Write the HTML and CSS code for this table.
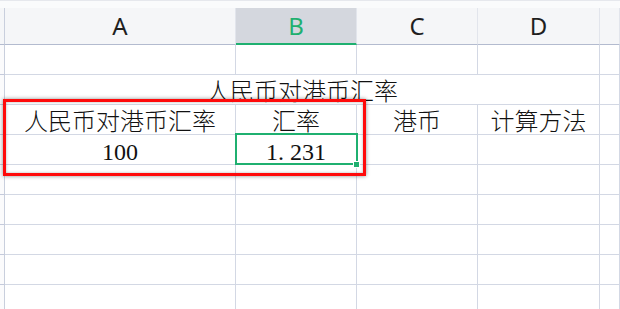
FILE: index.html
```html
<!DOCTYPE html>
<html lang="zh-CN">
<head>
<meta charset="utf-8">
<title>人民币对港币汇率</title>
<link rel="stylesheet" href="styles.css">
</head>
<body>
<div class="page">
  <div class="topband"></div>
  <div class="sheet">
    <div class="h corner"></div>
    <div class="h">A</div>
    <div class="h active">B</div>
    <div class="h">C</div>
    <div class="h">D</div>
    <div class="h"></div>

    <div class="c rh"></div><div class="c"></div><div class="c"></div><div class="c"></div><div class="c"></div><div class="c"></div>

    <div class="c rh"></div><div class="c title">人民币对港币汇率</div><div class="c"></div>

    <div class="c rh"></div><div class="c">人民币对港币汇率</div><div class="c">汇率</div><div class="c">港币</div><div class="c">计算方法</div><div class="c"></div>

    <div class="c rh"></div><div class="c">100</div><div class="c sel">1<span class="dot">.</span>231<span class="selbox"></span><span class="handle"></span></div><div class="c"></div><div class="c"></div><div class="c"></div>

    <div class="c rh"></div><div class="c"></div><div class="c"></div><div class="c"></div><div class="c"></div><div class="c"></div>
    <div class="c rh"></div><div class="c"></div><div class="c"></div><div class="c"></div><div class="c"></div><div class="c"></div>
    <div class="c rh"></div><div class="c"></div><div class="c"></div><div class="c"></div><div class="c"></div><div class="c"></div>
    <div class="c rh"></div><div class="c"></div><div class="c"></div><div class="c"></div><div class="c"></div><div class="c"></div>
    <div class="c rh"></div><div class="c"></div><div class="c"></div><div class="c"></div><div class="c"></div><div class="c"></div>
  </div>
  <div class="mark"></div>
</div>
</body>
</html>
```
FILE: styles.css
```css
html, body {
  margin: 0;
  padding: 0;
  background: #ffffff;
}
.page {
  position: relative;
  width: 620px;
  height: 309px;
  overflow: hidden;
}
.topband {
  height: 8px;
  box-sizing: border-box;
  background: #fafbfc;
  border-top: 1px solid #e6e8ed;
}
.sheet {
  display: grid;
  grid-template-columns: 5px 231px 121px 121px 122px 20px;
  grid-template-rows: 37px;
  grid-auto-rows: 30px;
}
.h {
  box-sizing: border-box;
  background: #f5f6f8;
  border-right: 1px solid #e2e5ec;
  border-bottom: 1px solid #b3bbcf;
  display: flex;
  justify-content: center;
  font-family: "Noto Sans", "Open Sans", sans-serif;
  font-size: 24px;
  line-height: 36px;
  color: #1f1f1f;
}
.h.corner {
  background: #f5f6f8;
  border-right: 1px solid #c9cfdd;
}
.h.active {
  background: #d4d7de;
  color: #1fb070;
  border-bottom: 2px solid #1fb070;
  line-height: 35px;
}
.c {
  box-sizing: border-box;
  border-right: 1px solid #d3d8e4;
  border-bottom: 1px solid #d3d8e4;
  display: flex;
  justify-content: center;
  align-items: flex-start;
  padding-top: 4px;
  font-family: "Liberation Serif", "Noto Sans CJK SC", serif;
  font-size: 24px;
  font-weight: 300;
  line-height: 26px;
  color: #111111;
  white-space: nowrap;
}
.c.rh {
  background: #fbfbfc;
  border-right: 1px solid #c9cfdd;
  border-bottom: 1px solid #c4cadb;
}
.c.title {
  grid-column: 2 / 6;
}
.sel {
  position: relative;
}
.dot {
  margin-right: 6px;
}
.selbox {
  position: absolute;
  left: -1px;
  top: -2px;
  width: 123px;
  height: 32px;
  box-sizing: border-box;
  border: 2px solid #1fb070;
}
.handle {
  position: absolute;
  left: 117px;
  top: 26px;
  width: 5px;
  height: 5px;
  background: #1fb070;
  border: 1px solid #ffffff;
}
.mark {
  position: absolute;
  left: 3px;
  top: 99px;
  width: 363px;
  height: 77px;
  box-sizing: border-box;
  border: 3px solid #ff0a0a;
  box-shadow: 0 0 4px rgba(0, 0, 0, 0.45), inset 0 0 3px rgba(0, 0, 0, 0.3);
}
```
